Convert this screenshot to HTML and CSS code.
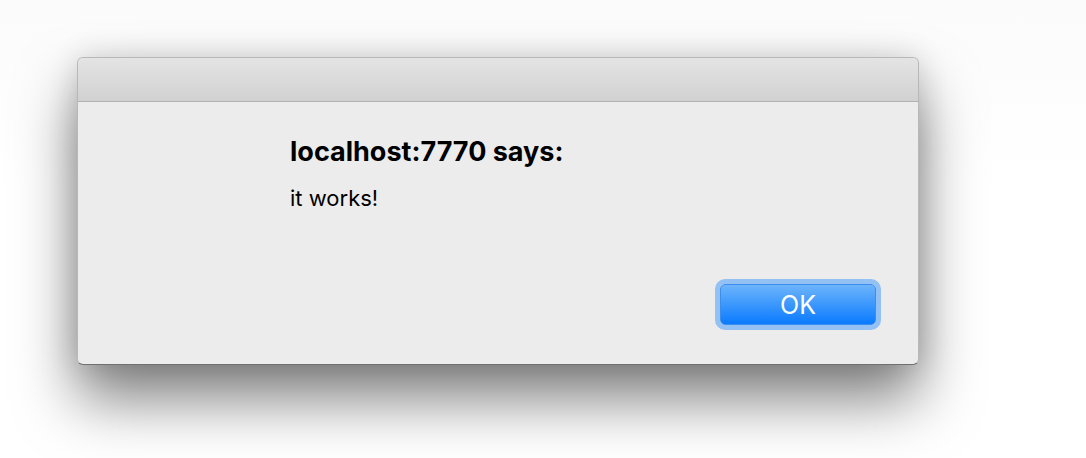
FILE: index.html
```html
<!DOCTYPE html>
<html lang="en">
  <head>
    <meta charset="UTF-8" />
    <title>localhost:7770 says</title>
    <link rel="stylesheet" href="styles.css">
  </head>
  <body>
    <div class="dialog">
      <div class="titlebar"></div>
      <div class="content">
        <h1>localhost:7770 says:</h1>
        <p>it works!</p>
      </div>
      <div class="actions">
        <button class="ok-button">OK</button>
      </div>
    </div>
  </body>
</html>
```

FILE: styles.css
```css
body {
  font-family: "Inter", "Liberation Sans", sans-serif;
  background: linear-gradient(#fbfbfb, #ffffff 40%);
  margin: 0;
  padding: 57px 0 0 77px;
  height: 458px;
  box-sizing: border-box;
  overflow: hidden;
}

.dialog {
  width: 842px;
  height: 308px;
  box-sizing: border-box;
  display: flex;
  flex-direction: column;
  background: #ececec;
  border: 1px solid #b8b8b8;
  border-bottom-color: #707070;
  border-radius: 6px;
  box-shadow: 0 34px 60px rgba(0, 0, 0, 0.5), 0 0 30px rgba(0, 0, 0, 0.14);
  overflow: hidden;
}

.titlebar {
  height: 43px;
  flex-shrink: 0;
  background: linear-gradient(#e4e4e4, #d1d1d1);
  border-bottom: 1px solid #b2b2b2;
}

.content {
  padding: 34px 0 0 212px;
  flex: 1;
}

h1 {
  margin: 0;
  font-size: 27px;
  line-height: 32px;
  font-weight: 700;
  color: #000;
}

p {
  margin: 17px 0 0;
  font-size: 22px;
  line-height: 26px;
  color: #000;
}

.actions {
  display: flex;
  justify-content: flex-end;
  padding: 0 42px 39px 0;
}

.ok-button {
  width: 156px;
  height: 41px;
  border: 1px solid #3b8ef0;
  border-radius: 5px;
  background: linear-gradient(#6db4fb, #0a7bff);
  box-shadow: 0 0 0 5px #93c1f3;
  color: #fff;
  font-family: "Inter", "Liberation Sans", sans-serif;
  font-size: 25px;
  padding: 0;
  cursor: pointer;
}
```
